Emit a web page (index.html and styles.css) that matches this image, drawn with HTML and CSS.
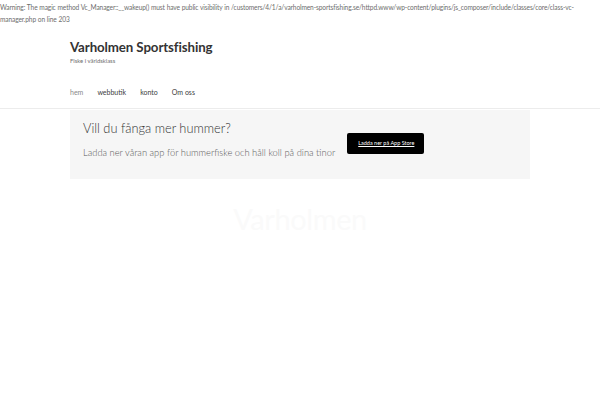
FILE: index.html
```html
<!DOCTYPE html>
<html lang="sv">
<head>
<meta charset="utf-8">
<title>Varholmen Sportsfishing</title>
<link rel="stylesheet" href="styles.css">
</head>
<body>
<div class="warning">Warning: The magic method Vc_Manager::__wakeup() must have public visibility in /customers/4/1/a/varholmen-sportsfishing.se/httpd.www/wp-content/plugins/js_composer/include/classes/core/class-vc-manager.php on line 203</div>
<header class="site-header">
  <div class="col-full">
    <div class="branding">
      <div class="site-title">Varholmen Sportsfishing</div>
      <div class="tagline">Fiske i världsklass</div>
    </div>
    <nav class="nav">
      <a class="nav-item current" href="#">hem</a>
      <a class="nav-item" href="#">webbutik</a>
      <a class="nav-item" href="#">konto</a>
      <a class="nav-item" href="#">Om oss</a>
    </nav>
  </div>
</header>
<main class="col-full content">
  <section class="promo">
    <div class="promo-text">
      <h2 class="promo-title">Vill du fånga mer hummer?</h2>
      <p class="promo-sub">Ladda ner våran app för hummerfiske och håll koll på dina tinor</p>
    </div>
    <a class="btn" href="#">Ladda ner på App Store</a>
  </section>
  <div class="ghost">Varholmen</div>
</main>
</body>
</html>
```
FILE: styles.css
```css
html, body { margin: 0; padding: 0; background: #fff; }
body { font-family: "Lato", "Open Sans", sans-serif; color: #6d6d6d; }
.warning { font-size: 6.6px; letter-spacing: -0.12px; word-spacing: 0.3px; line-height: 12px; color: #6d6d6d; padding-top: 1px; }
.site-header { border-bottom: 1px solid #ececec; }
.col-full { width: 460px; margin: 0 auto; }
.branding { padding-top: 13px; }
.site-title { font-size: 13.3px; font-weight: 700; color: #333; line-height: 18px; letter-spacing: -0.1px; }
.tagline { font-size: 5.9px; color: #6d6d6d; line-height: 9px; }
.nav { display: flex; gap: 14px; padding: 22px 0 11px; }
.nav-item { font-size: 7px; color: #404040; text-decoration: none; line-height: 10px; }
.nav-item.current { color: #8a8a8a; }
.promo { background: #f6f6f6; display: flex; align-items: flex-start; gap: 12px; padding: 10px 13px 20px; margin-top: 1px; }
.promo-title { margin: 0; font-size: 12.8px; font-weight: 300; color: #333; line-height: 17px; }
.promo-sub { margin: 10px 0 0; font-size: 9.35px; font-weight: 300; color: #5a5a5a; line-height: 12px; }
.btn { background: #000; color: #fff; font-size: 5.5px; text-decoration: underline; padding: 7px 10px 7px 11px; border-radius: 2px; margin-top: 13px; line-height: 7px; white-space: nowrap; }
.ghost { text-align: center; font-size: 29px; color: #fafafa; margin-top: 22px; letter-spacing: -0.4px; line-height: 35px; }
```
